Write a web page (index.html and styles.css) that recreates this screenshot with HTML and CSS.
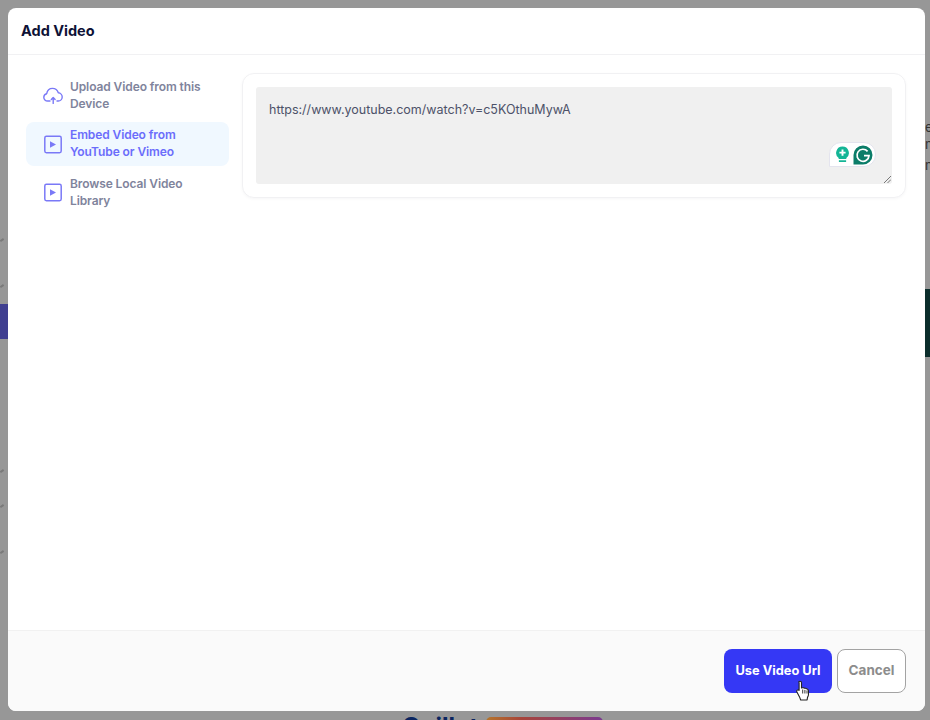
FILE: index.html
```html
<!DOCTYPE html>
<html lang="en">
<head>
<meta charset="utf-8">
<title>Add Video</title>
<link rel="stylesheet" href="styles.css">
</head>
<body>
<div class="backdrop">
  <span class="bg-strip bg-strip-blue"></span>
  <span class="bg-strip bg-strip-dark"></span>
  <span class="bg-letter bg-letter-1">e</span>
  <span class="bg-letter bg-letter-2">n</span>
  <span class="bg-letter bg-letter-3">n</span>
  <span class="bg-tick bg-tick-1"></span>
  <span class="bg-tick bg-tick-2"></span>
  <span class="bg-tick bg-tick-3"></span>
  <span class="bg-tick bg-tick-4"></span>
  <span class="bg-tick bg-tick-5"></span>
  <span class="bg-logo">Quillet</span>
  <span class="bg-gradient"></span>

  <div class="modal">
    <header class="modal-header"><h1 class="modal-title">Add Video</h1></header>
    <div class="modal-body">
      <nav class="side">
        <a class="side-item">
          <svg class="side-icon" width="20" height="20" viewBox="0 0 20 20" fill="none" stroke="currentColor" stroke-width="1.4" stroke-linecap="round" stroke-linejoin="round"><path d="M7 16H4.600C2.500 16 .8 14.300.8 12.300c0-1.800 1.200-3.200 2.900-3.600.5-2.900 2.800-5.300 5.800-5.300 2.700 0 5 1.800 5.800 4.400 2.100.2 3.900 2 3.900 4.100 0 2.200-1.800 4.100-4 4.100h-1.200"/><path d="M10.200 18.400v-5.600M8.300 14.500l1.900-2 1.900 2"/></svg>
          <span class="side-label">Upload Video from this Device</span>
        </a>
        <a class="side-item side-item-active">
          <svg class="side-icon" width="20" height="20" viewBox="0 0 20 20" fill="none"><rect x="1.800" y="2.300" width="16.400" height="16.400" rx="1.600" stroke="currentColor" stroke-width="1.500"/><path d="M7 7.300v6.400l6-3.200z" fill="currentColor"/></svg>
          <span class="side-label">Embed Video from YouTube or Vimeo</span>
        </a>
        <a class="side-item">
          <svg class="side-icon" width="20" height="20" viewBox="0 0 20 20" fill="none"><rect x="1.800" y="2.300" width="16.400" height="16.400" rx="1.600" stroke="currentColor" stroke-width="1.500"/><path d="M7 7.300v6.400l6-3.200z" fill="currentColor"/></svg>
          <span class="side-label">Browse Local Video Library</span>
        </a>
      </nav>
      <section class="panel-area">
        <div class="card">
          <div class="field">
            <div class="url-text">https://www.youtube.com/watch?v=c5KOthuMywA</div>
            <div class="gram">
              <svg width="15" height="17" viewBox="0 0 14 16"><path d="M7 .5a6 6 0 0 1 3.600 10.800v.9H3.400v-.9A6 6 0 0 1 7 .5z" fill="#14b596"/><path d="M3.600 13.400h6.800v1.600H3.600z" fill="#14b596"/><path d="M6.100 3.400h1.800v2h2v1.700h-2v2H6.100v-2h-2V5.400h2z" fill="#fff"/></svg>
              <svg width="20" height="20" viewBox="0 0 20 20"><path d="M10 .5a9.500 9.500 0 1 1 0 19H.5V10A9.500 9.500 0 0 1 10 .5z" fill="#0b7d69"/><path d="M14.600 6.400A6 6 0 1 0 16 10.600h-5" fill="none" stroke="#fff" stroke-width="1.700"/></svg>
            </div>
            <svg class="grip" width="7" height="7" viewBox="0 0 7 7" stroke="#777" stroke-width="1"><path d="M0 7 7 0M3.500 7 7 3.500"/></svg>
          </div>
        </div>
      </section>
    </div>
    <footer class="modal-footer">
      <button class="btn btn-primary">Use Video Url</button>
      <button class="btn btn-ghost">Cancel</button>
      <svg class="cursor" width="15" height="21" viewBox="0 0 15 21"><path d="M4 1.200c.9 0 1.500.7 1.500 1.600v5.100l.9-.2 1 .1 1 .3 1 .1 1 .4c1.300.2 2 1.100 2.100 2.300v3.300c0 1.300-.4 2.300-1 3.200l-.4 2.600H4.700l-.9-2.400L.9 12c-.4-.7-.2-1.500.4-1.900.6-.4 1.300-.3 1.800.2V2.800C2.500 1.900 3.100 1.200 4 1.200z" fill="#fff" stroke="#222" stroke-width="1.100" stroke-linejoin="round"/><path d="M6.700 9.500v4M8.900 9.900v3.600M11 10.500v3" stroke="#222" stroke-width=".9"/></svg>
    </footer>
  </div>
</div>
</body>
</html>
```
FILE: styles.css
```css
html, body {
  margin: 0;
  padding: 0;
}

.backdrop {
  position: relative;
  box-sizing: border-box;
  width: 930px;
  height: 720px;
  overflow: hidden;
  padding: 8px 5px 9px 8px;
  background: #979797;
  font-family: Inter, "Liberation Sans", sans-serif;
}

.bg-strip {
  position: absolute;
}

.bg-strip-blue {
  left: 0;
  top: 304px;
  width: 8px;
  height: 35px;
  background: #403f90;
}

.bg-strip-dark {
  right: 0;
  top: 289px;
  width: 5px;
  height: 68px;
  background: #0c2e2c;
}

.bg-letter {
  position: absolute;
  left: 925px;
  font-size: 13px;
  line-height: 16px;
  color: #333;
}

.bg-letter-1 { top: 119px; }
.bg-letter-2 { top: 136px; }
.bg-letter-3 { top: 157px; }

.bg-tick {
  position: absolute;
  left: 0;
  width: 4px;
  height: 2px;
  background: #7a7a7a;
  transform: rotate(-35deg);
}

.bg-tick-1 { top: 239px; }
.bg-tick-2 { top: 285px; }
.bg-tick-3 { top: 470px; }
.bg-tick-4 { top: 505px; }
.bg-tick-5 { top: 551px; }

.bg-logo {
  position: absolute;
  left: 402px;
  top: 713px;
  font-size: 24px;
  line-height: 28px;
  font-weight: 700;
  color: #0b2560;
}

.bg-gradient {
  position: absolute;
  left: 486px;
  top: 717px;
  width: 117px;
  height: 20px;
  border-radius: 5px;
  background: linear-gradient(90deg, #b5752a, #a8453a 30%, #7b3a90);
}

.modal {
  position: relative;
  display: flex;
  flex-direction: column;
  height: 100%;
  overflow: hidden;
  border-radius: 8px;
  background: #fff;
}

.modal-header {
  flex: none;
  display: flex;
  align-items: center;
  height: 46px;
  padding: 0 13px;
  border-bottom: 1px solid #f1f1f3;
}

.modal-title {
  margin: 0;
  font-size: 14.500px;
  line-height: 22px;
  font-weight: 700;
  color: #0e1236;
}

.modal-body {
  flex: 1;
  display: flex;
  gap: 13px;
  padding: 18px 19px 0 18px;
}

.side {
  flex: none;
  display: flex;
  flex-direction: column;
  gap: 5px;
  width: 203px;
}

.side-item {
  display: flex;
  align-items: center;
  gap: 7px;
  height: 44px;
  padding: 0 17px;
  border-radius: 8px;
  font-size: 12px;
  line-height: 17px;
  font-weight: 600;
  letter-spacing: -.1px;
  color: #7f849c;
}

.side-item + .side-item .side-label {
  margin-top: -2px;
}

.side-item:last-child .side-icon {
  margin-top: -2px;
}

.side-icon {
  flex: none;
  color: #7a79f7;
}

.side-item-active {
  background: #f0f8ff;
  color: #6b6dfb;
}

.panel-area {
  flex: 1;
  min-width: 0;
}

.card {
  box-sizing: border-box;
  height: 125px;
  padding: 13px;
  border: 1px solid #f1f1f3;
  border-radius: 12px;
  box-shadow: 0 1px 3px rgba(20, 20, 60, .04);
  background: #fff;
}

.field {
  position: relative;
  box-sizing: border-box;
  height: 97px;
  padding: 14px 13px;
  border-radius: 3px;
  background: #f0f0f0;
}

.url-text {
  font-size: 12.500px;
  line-height: 17px;
  color: #4d5269;
}

.gram {
  position: absolute;
  right: 16px;
  top: 55px;
  display: flex;
  align-items: center;
  gap: 3px;
  box-sizing: border-box;
  height: 25px;
  padding: 0 2px 0 5px;
  border: 1px solid #e4e4ee;
  border-radius: 12px 12px 12px 0;
  background: #fff;
}

.grip {
  position: absolute;
  right: 1px;
  bottom: 1px;
}

.modal-footer {
  position: relative;
  flex: none;
  display: flex;
  justify-content: flex-end;
  align-items: center;
  gap: 5px;
  box-sizing: border-box;
  height: 81px;
  padding: 0 19px 0 0;
  border-top: 1px solid #f1f1f1;
  background: #fafafa;
}

.btn {
  box-sizing: border-box;
  height: 44px;
  padding: 0 0 2px;
  border-radius: 8px;
  font-family: inherit;
  font-weight: 700;
}

.btn-primary {
  width: 108px;
  border: 0;
  font-size: 12.800px;
  background: #3538f5;
  color: #fff;
}

.btn-ghost {
  width: 69px;
  border: 1px solid #a3a3a3;
  font-size: 13.500px;
  background: #fff;
  color: #8c8c8c;
}

.cursor {
  position: absolute;
  left: 788px;
  top: 49px;
}
```
